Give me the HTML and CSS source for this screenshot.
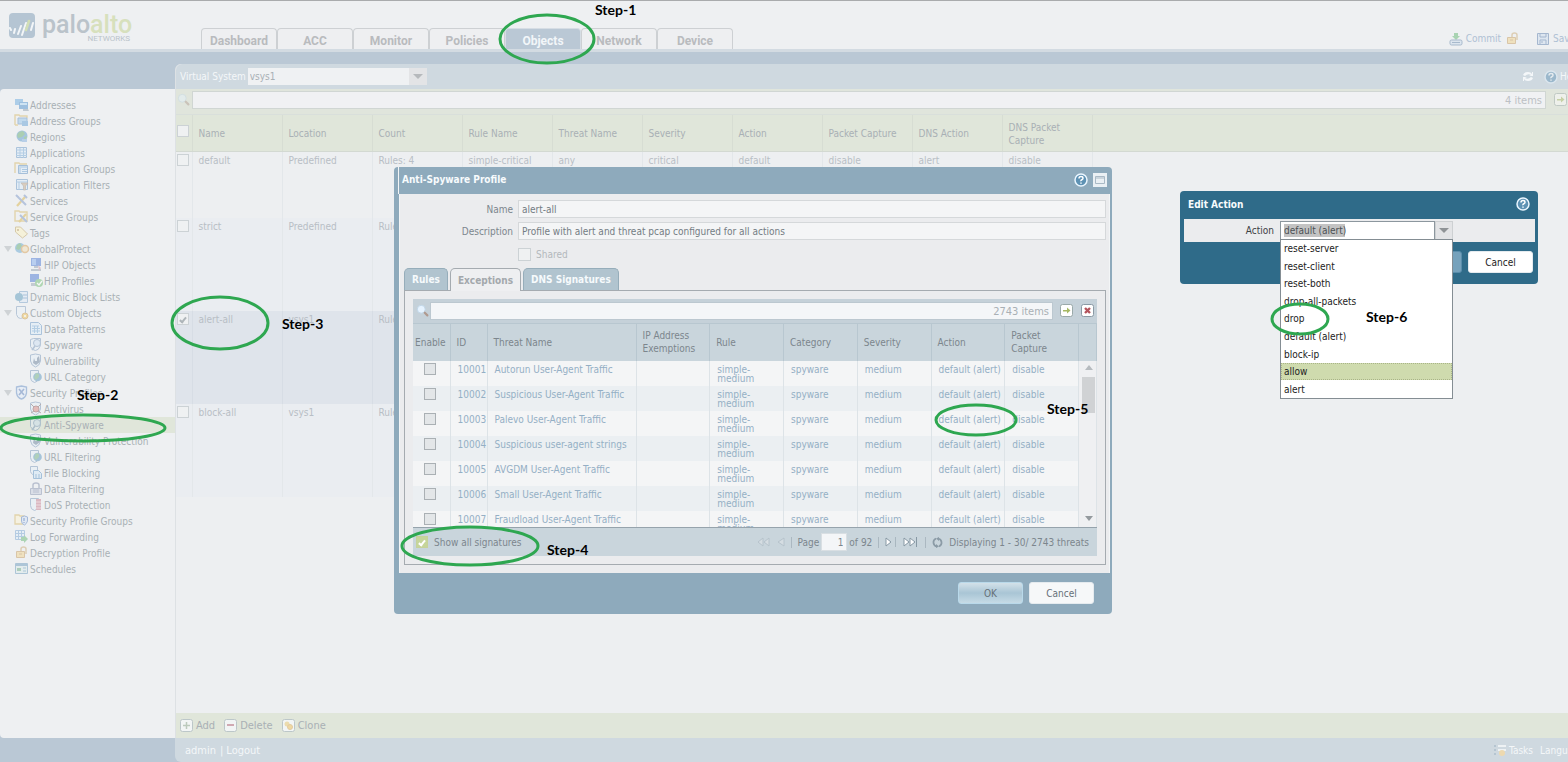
FILE: index.html
```html
<!DOCTYPE html>
<html lang="en">
<head>
<meta charset="utf-8">
<title>Anti-Spyware Profiles</title>
<link rel="stylesheet" href="styles.css">
</head>
<body>
<svg class="defs" aria-hidden="true">
  <symbol id="i-address" viewBox="0 0 16 16"><path d="M1 2h8v6H1z" fill="#5ea3dd"/><path d="M5 5h9v7H5z" fill="#3d86c9"/><path d="M6 6h7v2H6z" fill="#a9d4f5"/><path d="M9 12h5l1 2H9z" fill="#8a99a8"/></symbol>
  <symbol id="i-group" viewBox="0 0 16 16"><path d="M1 12V2h4l1 1h7v2M1 12h3" fill="none" stroke="#d5b35a" stroke-width="1.4"/><path d="M4 5h9v6H4z" fill="#8fc0e8" stroke="#5487bb"/><path d="M8 8h6v5H8z" fill="#5698d2"/></symbol>
  <symbol id="i-globe" viewBox="0 0 16 16"><circle cx="8" cy="7" r="5.5" fill="#4f93c9"/><path d="M5 3l4-1 2 3-3 3-4 1-1-3zM10 8l3-1-1 4-2 1z" fill="#5aa667"/><path d="M8 10h5v3H8z" fill="#79a9dd"/></symbol>
  <symbol id="i-app" viewBox="0 0 16 16"><path d="M2.500 2.500h10v10h-10z" fill="#d8ebfa" stroke="#5b8dc0"/><path d="M2 5h11M2 8h11M2 10.500h11M6 3v10M9.500 3v10" stroke="#6fa5d5"/></symbol>
  <symbol id="i-appgroup" viewBox="0 0 16 16"><path d="M1 12V2h4l1 1h7" fill="none" stroke="#d5b35a" stroke-width="1.400"/><path d="M4.500 4.500h9v8h-9z" fill="#d8ebfa" stroke="#4f86bd"/><path d="M4 6h10M6 7v5M8 8.500h5M8 10.500h5" stroke="#5e98cd"/></symbol>
  <symbol id="i-filter" viewBox="0 0 16 16"><path d="M2.500 2.500h11v10h-11z" fill="#d8ebfa" stroke="#5b8dc0"/><path d="M2 5h11M5 5v8" stroke="#6fa5d5"/><path d="M7 6h7l-2.500 3v4h-2V9z" fill="#c2a381" stroke="#8c7b6b" stroke-width=".7"/></symbol>
  <symbol id="i-tools" viewBox="0 0 16 16"><path d="M3 13l8-9" stroke="#d8af3a" stroke-width="2.200"/><path d="M4 4l8 8M2 2l3 3M10 2l3 3" stroke="#718fc4" stroke-width="2"/></symbol>
  <symbol id="i-toolgroup" viewBox="0 0 16 16"><path d="M1 12V2h4l1 1h7v9z" fill="none" stroke="#d5b35a" stroke-width="1.400"/><path d="M5 13l7-8" stroke="#d8af3a" stroke-width="2"/><path d="M6 6l7 7" stroke="#718fc4" stroke-width="2"/></symbol>
  <symbol id="i-tag" viewBox="0 0 16 16"><path d="M1.500 2v5l7 6 5-4-7-7z" fill="#fff3bd" stroke="#b99c52"/><circle cx="4" cy="5" r="1" fill="#a8823e"/></symbol>
  <symbol id="i-gp" viewBox="0 0 16 16"><circle cx="6" cy="7" r="5" fill="#5a9fce"/><path d="M3 4l3-2 2 3-3 4-3-1z" fill="#5aa667"/><circle cx="11" cy="8" r="3.500" fill="#f2ddb0" stroke="#d59946" stroke-width="1.500"/></symbol>
  <symbol id="i-pc" viewBox="0 0 16 16"><path d="M3 1h10v8H3z" fill="#3d6dd0"/><path d="M4 2h4v6H4z" fill="#7ba7ec"/><path d="M6 9h4v2H6zM3 12h10v2H3z" fill="#8e9bab"/><path d="M10 8l3 3-2 3z" fill="#c98c9a"/></symbol>
  <symbol id="i-pcok" viewBox="0 0 16 16"><path d="M2 1h9v8H2z" fill="#3d6dd0"/><path d="M3 10h7v3H3z" fill="#93a0ae"/><circle cx="11" cy="10" r="4" fill="#65b867"/><path d="M9 10l2 2 3-4" fill="none" stroke="#fff" stroke-width="1.300"/></symbol>
  <symbol id="i-block" viewBox="0 0 16 16"><path d="M5.500 2.500h8v11h-8z" fill="#d8e7f6" stroke="#6e9ac4"/><circle cx="5" cy="8" r="4" fill="#4e93b8"/><path d="M9 6h4M9 9h4" stroke="#5c8abd"/></symbol>
  <symbol id="i-custom" viewBox="0 0 16 16"><path d="M2.500 1.500h9v8q-2 4-5 4t-4-4z" fill="#e9f0f8" stroke="#7897ba"/><circle cx="11" cy="11" r="3" fill="#f0bd40" stroke="#c5913a"/><circle cx="11" cy="11" r="1" fill="#fff"/></symbol>
  <symbol id="i-doc" viewBox="0 0 16 16"><path d="M2.500 1.500h8l3 3v9h-11z" fill="#dcecfa" stroke="#5b8dc0"/><path d="M4 5h7M4 7.500h8M4 10h8M6.500 5v7M9.500 5v7" stroke="#6fa5d5"/></symbol>
  <symbol id="i-spy" viewBox="0 0 16 16"><path d="M2.500 2.500l3-1h7v7q-2 5-5 5t-5-4z" fill="#e4eef8" stroke="#6f90b6"/><circle cx="9" cy="6" r="3.500" fill="#c9def2" stroke="#6f90b6"/><path d="M7 9l-3 4" stroke="#6f90b6" stroke-width="1.500"/></symbol>
  <symbol id="i-vuln" viewBox="0 0 16 16"><path d="M2.500 2l5-1 5 1v6q-1 5-5 6-4-1-5-6z" fill="#e4eef8" stroke="#6f90b6"/><path d="M6 5l-1 5 3 2 4-3-1-6-2 2v3H7z" fill="#5f7894"/></symbol>
  <symbol id="i-url" viewBox="0 0 16 16"><path d="M2.500 1.500h8v7q-1 5-4 5-4-1-4-5z" fill="#e4eef8" stroke="#6f90b6"/><circle cx="9.500" cy="8" r="4.300" fill="#4d8eba"/><path d="M8 4l3 1v3l-3 3-2-2z" fill="#63aa77"/></symbol>
  <symbol id="i-shield" viewBox="0 0 16 16"><path d="M2.500 2l5-1 5 1v6q-1 5-5 6-4-1-5-6z" fill="#e0ebfa" stroke="#5b87c2" stroke-width="1.300"/><path d="M5 4l5 6M10 4l-5 6" stroke="#4d75b5" stroke-width="1.600"/></symbol>
  <symbol id="i-virus" viewBox="0 0 16 16"><path d="M2.500 2l5-1 5 1v6q-1 5-5 6-4-1-5-6z" fill="#e4eef8" stroke="#6f90b6"/><circle cx="8" cy="8" r="3" fill="#d77d76" stroke="#8a4c4c"/><path d="M3 3l3 3M13 3l-3 3M3 12l3-2M13 12l-3-2" stroke="#785a5a"/></symbol>
  <symbol id="i-file" viewBox="0 0 16 16"><path d="M2.500 1.500h7v9q-6 0-7-4z" fill="#e4eef8" stroke="#6f90b6"/><path d="M5.500 5.500h5l3 3v5h-8z" fill="#cfe5f7" stroke="#4e8abf"/><path d="M8 9v4M11 9v4" stroke="#4e8abf"/></symbol>
  <symbol id="i-data" viewBox="0 0 16 16"><path d="M5 7V4q0-2 3-2t3 2v3" fill="none" stroke="#7c89a8" stroke-width="1.500"/><path d="M2.500 7.500h11v6h-11z" fill="#c4c9db" stroke="#7c89a8"/><path d="M5 9h6M5 11h6" stroke="#7c89a8"/></symbol>
  <symbol id="i-dos" viewBox="0 0 16 16"><path d="M2.500 1.500h8v7q-1 5-4 5-4-1-4-5z" fill="#e4eef8" stroke="#6f90b6"/><path d="M8 2h5v11H8z" fill="#c47486"/><path d="M8 5h5M8 8h5M8 11h5" stroke="#e8c1ca"/></symbol>
  <symbol id="i-secgroup" viewBox="0 0 16 16"><path d="M1 11V2h4l1 1h4v8z" fill="#fff4cd" stroke="#d5b35a" stroke-width="1.300"/><path d="M7.500 4l3-1 3 1v4q-1 3-3 4-3-1-3-4z" fill="#cfe0f8" stroke="#4f78bd"/><path d="M10 5v3M10 9v1" stroke="#4f78bd" stroke-width="1.500"/></symbol>
  <symbol id="i-log" viewBox="0 0 16 16"><path d="M1.500 1.500h9v9h-9z" fill="#dcecfa" stroke="#6f9fd0"/><path d="M1 4.500h9M1 7.500h9M4.500 2v8M7.500 2v8" stroke="#6f9fd0"/><path d="M7 8h3V6l4 4-4 4v-2H7z" fill="#5eb36a"/></symbol>
  <symbol id="i-lock" viewBox="0 0 16 16"><path d="M7 7V4q0-2 2.500-2T12 4v5" fill="none" stroke="#caa66c" stroke-width="1.500"/><path d="M2.500 6.500h8v6h-8z" fill="#f2cf81" stroke="#c1924f"/><path d="M5 9h3" stroke="#c1924f"/></symbol>
  <symbol id="i-sched" viewBox="0 0 16 16"><path d="M1.500 2.500h12v10h-12z" fill="#d6e9e8" stroke="#5f93b8"/><path d="M1 4h13" stroke="#5f93b8" stroke-width="2"/><path d="M3 7h4v3H3z" fill="#5da477"/><path d="M9 7h3M9 10h3" stroke="#5f93b8"/></symbol>
  <symbol id="i-search" viewBox="0 0 16 16"><circle cx="6" cy="6" r="4.500" fill="#e6f3ff" stroke="#bdd3e6"/><path d="M10 10l3 3" stroke="#b09a90" stroke-width="2.500" stroke-linecap="round"/></symbol>
  <symbol id="i-go" viewBox="0 0 14 14"><rect x=".5" y=".5" width="12" height="12" rx="2" fill="#fff" stroke="#9aa9a9"/><path d="M3 6h4V3.500L10.500 6.500 7 9.500V7.500H3z" fill="#a7b964"/></symbol>
  <symbol id="i-clear" viewBox="0 0 14 14"><rect x=".5" y=".5" width="12" height="12" rx="2" fill="#fff" stroke="#8b9aa5"/><path d="M4 4l5 5M9 4l-5 5" stroke="#b4535c" stroke-width="2.400"/></symbol>
  <symbol id="i-help" viewBox="0 0 14 14"><circle cx="7" cy="7" r="6" fill="#5e92b4" stroke="#eaf6ff" stroke-width="1.500"/><path d="M5 5.500q0-2 2-2t2 1.700q0 1-1.200 1.500T7 8.300M7 9.500v1.300" fill="none" stroke="#fff" stroke-width="1.500"/></symbol>
</svg>

<div class="app">
  <header class="top">
    <div class="logo">
      <svg width="27" height="26" viewBox="0 0 27 26" aria-hidden="true"><rect width="26" height="25" rx="4" fill="#b5c5d3"/><g fill="none" stroke="#f3f6f8" stroke-width="2" stroke-linecap="round"><path d="M2 17l-1-2M5 20l1-4M9 21l3-8M13 22l4-12M22 17l2-7"/></g><path d="M17 17l3-9" stroke="#d2dfb5" stroke-width="2.500" stroke-linecap="round"/></svg>
      <div class="brand"><span class="word">palo<b>alto</b></span><span class="sub">NETWORKS</span></div>
    </div>
    <nav class="tabs">
      <a href="#">Dashboard</a><a href="#">ACC</a><a href="#">Monitor</a><a href="#">Policies</a><a href="#" class="on">Objects</a><a href="#">Network</a><a href="#">Device</a>
    </nav>
    <div class="actions">
      <a href="#"><svg width="14" height="14" viewBox="0 0 14 14"><path d="M5 1h4v3h2L7 8 3 4h2z" fill="#a8d3b2"/><rect x="1" y="8" width="12" height="5" rx="1.500" fill="#dce5ee" stroke="#a7b9cc"/><path d="M3 10.500h8" stroke="#a7b9cc"/></svg>Commit</a>
      <svg class="ic" width="16" height="16"><use href="#i-lock"/></svg>
      <a href="#" class="save"><svg width="12" height="12" viewBox="0 0 12 12"><path d="M.5.500h11v11H.5z" fill="#dde6f0" stroke="#a5b7cf"/><path d="M3 1v3h6V1M3 11V7h6v4M5 8v2" fill="none" stroke="#a5b7cf"/></svg>Save</a>
    </div>
  </header>
  <div class="band"></div>

  <div class="columns">
    <aside class="side">
      <ul class="tree">
        <li><svg><use href="#i-address"/></svg>Addresses</li>
        <li><svg><use href="#i-group"/></svg>Address Groups</li>
        <li><svg><use href="#i-globe"/></svg>Regions</li>
        <li><svg><use href="#i-app"/></svg>Applications</li>
        <li><svg><use href="#i-appgroup"/></svg>Application Groups</li>
        <li><svg><use href="#i-filter"/></svg>Application Filters</li>
        <li><svg><use href="#i-tools"/></svg>Services</li>
        <li><svg><use href="#i-toolgroup"/></svg>Service Groups</li>
        <li><svg><use href="#i-tag"/></svg>Tags</li>
        <li class="open"><svg><use href="#i-gp"/></svg>GlobalProtect</li>
        <li class="sub"><svg><use href="#i-pc"/></svg>HIP Objects</li>
        <li class="sub"><svg><use href="#i-pcok"/></svg>HIP Profiles</li>
        <li><svg><use href="#i-block"/></svg>Dynamic Block Lists</li>
        <li class="open"><svg><use href="#i-custom"/></svg>Custom Objects</li>
        <li class="sub"><svg><use href="#i-doc"/></svg>Data Patterns</li>
        <li class="sub"><svg><use href="#i-spy"/></svg>Spyware</li>
        <li class="sub"><svg><use href="#i-vuln"/></svg>Vulnerability</li>
        <li class="sub"><svg><use href="#i-url"/></svg>URL Category</li>
        <li class="open"><svg><use href="#i-shield"/></svg>Security Profiles</li>
        <li class="sub"><svg><use href="#i-virus"/></svg>Antivirus</li>
        <li class="sub on"><svg><use href="#i-spy"/></svg>Anti-Spyware</li>
        <li class="sub"><svg><use href="#i-vuln"/></svg>Vulnerability Protection</li>
        <li class="sub"><svg><use href="#i-url"/></svg>URL Filtering</li>
        <li class="sub"><svg><use href="#i-file"/></svg>File Blocking</li>
        <li class="sub"><svg><use href="#i-data"/></svg>Data Filtering</li>
        <li class="sub"><svg><use href="#i-dos"/></svg>DoS Protection</li>
        <li><svg><use href="#i-secgroup"/></svg>Security Profile Groups</li>
        <li><svg><use href="#i-log"/></svg>Log Forwarding</li>
        <li><svg><use href="#i-lock"/></svg>Decryption Profile</li>
        <li><svg><use href="#i-sched"/></svg>Schedules</li>
      </ul>
    </aside>

    <main class="main">
      <div class="context">
        <label for="vsys">Virtual System</label>
        <span class="combo"><select id="vsys"><option>vsys1</option></select><i></i></span>
        <div class="right">
          <svg width="12" height="11" viewBox="0 0 12 11"><path d="M1 4q1-3 5-3 3 0 4 2V1h1v4H7l2-1Q6 2 3 5zM11 7q-1 3-5 3-3 0-4-2v2H1V6h4L3 7q3 2 6-1z" fill="#f4f7f9"/></svg>
          <a href="#" class="help"><svg width="14" height="14"><use href="#i-help"/></svg>Help</a>
        </div>
      </div>
      <div class="search">
        <svg class="ic" width="14" height="14" viewBox="0 0 14 14"><use href="#i-search"/></svg>
        <div class="field"><input type="text" aria-label="Filter profiles"><span>4 items</span></div>
        <svg class="ic go" width="14" height="14"><use href="#i-go"/></svg>
      </div>
      <div class="listing">
        <table class="grid">
          <colgroup><col class="c-chk"><col span="10" class="c-std"><col></colgroup>
          <thead><tr><th><input type="checkbox" aria-label="Select all"></th><th>Name</th><th>Location</th><th>Count</th><th>Rule Name</th><th>Threat Name</th><th>Severity</th><th>Action</th><th>Packet Capture</th><th>DNS Action</th><th>DNS Packet<br>Capture</th><th></th></tr></thead>
          <tbody>
            <tr class="first"><td><input type="checkbox" aria-label="default"></td><td>default</td><td>Predefined</td><td>Rules: 4</td><td>simple-critical</td><td>any</td><td>critical</td><td>default</td><td>disable</td><td>alert</td><td>disable</td><td class="end"></td></tr>
            <tr class="alt"><td><input type="checkbox" aria-label="strict"></td><td>strict</td><td>Predefined</td><td>Rules: 5</td><td></td><td></td><td></td><td></td><td></td><td></td><td></td><td class="end"></td></tr>
            <tr class="sel"><td><input type="checkbox" checked aria-label="alert-all"></td><td>alert-all</td><td>vsys1</td><td>Rules: 5</td><td></td><td></td><td></td><td></td><td></td><td></td><td></td><td class="end"></td></tr>
            <tr class="alt"><td><input type="checkbox" aria-label="block-all"></td><td>block-all</td><td>vsys1</td><td>Rules: 5</td><td></td><td></td><td></td><td></td><td></td><td></td><td></td><td class="end"></td></tr>
          </tbody>
        </table>
      </div>
      <div class="tools">
        <button type="button"><svg width="13" height="13" viewBox="0 0 13 13"><rect x=".5" y=".5" width="12" height="12" rx="2" fill="#f2f5f5" stroke="#bcc7c9"/><path d="M3 6.500h7M6.500 3v7" stroke="#bccabd" stroke-width="1.500"/></svg>Add</button>
        <button type="button"><svg width="13" height="13" viewBox="0 0 13 13"><rect x=".5" y=".5" width="12" height="12" rx="2" fill="#f2f5f5" stroke="#bcc7c9"/><path d="M3 6h7" stroke="#d0a9b2" stroke-width="2"/></svg>Delete</button>
        <button type="button"><svg width="13" height="13" viewBox="0 0 13 13"><rect x=".5" y=".5" width="12" height="12" rx="2" fill="#f2f5f5" stroke="#bcc7c9"/><circle cx="5" cy="5" r="2.500" fill="#ecdcae"/><circle cx="8" cy="8" r="2.500" fill="#eed9a2" stroke="#e3caa0"/></svg>Clone</button>
      </div>
    </main>
  </div>

  <footer class="foot">
    <div class="footbar">
      <a href="#">admin</a><span class="bar">|</span><a href="#">Logout</a>
      <div class="right"><a href="#"><svg width="14" height="13" viewBox="0 0 14 13"><path d="M1 1h2v2H1zM1 5h2v2H1zM1 9h2v2H1z" fill="#b5c5d1"/><path d="M5 2h8M5 6h8" stroke="#eef2f4" stroke-width="2"/><circle cx="9" cy="9" r="3" fill="#edd9af"/></svg>Tasks</a><a href="#" class="lang">Language</a></div>
    </div>
  </footer>
</div>

<section class="dialog profile" role="dialog" aria-labelledby="pt">
  <div class="dtitle"><h2 id="pt">Anti-Spyware Profile</h2><svg width="14" height="14"><use href="#i-help"/></svg><svg width="14" height="14" viewBox="0 0 14 14"><path d="M0 0h14v14H0z" fill="#eaf0f4"/><path d="M2.500 3.500h9v7h-9zM3 5h8" fill="none" stroke="#a9b9c5"/></svg></div>
  <div class="dbody">
    <form class="form">
      <label for="pn">Name</label><input id="pn" type="text" value="alert-all">
      <label for="pd">Description</label><input id="pd" type="text" value="Profile with alert and threat pcap configured for all actions">
      <span></span><span class="shared"><input id="ps" type="checkbox" disabled><label for="ps">Shared</label></span>
    </form>
    <div class="dtabs"><button type="button">Rules</button><button type="button" class="on">Exceptions</button><button type="button">DNS Signatures</button></div>
    <div class="panel">
      <div class="search">
        <svg width="14" height="14" viewBox="0 0 14 14"><use href="#i-search"/></svg>
        <div class="field"><input type="text" aria-label="Filter threats"><span>2743 items</span></div>
        <svg width="14" height="14"><use href="#i-go"/></svg><svg width="14" height="14"><use href="#i-clear"/></svg>
      </div>
      <div class="rows">
        <table class="sigs">
          <colgroup><col class="s-id"><col class="s-id"><col class="s-name"><col span="6"><col class="s-bar"></colgroup>
          <thead><tr><th>Enable</th><th>ID</th><th>Threat Name</th><th>IP Address<br>Exemptions</th><th>Rule</th><th>Category</th><th>Severity</th><th>Action</th><th>Packet<br>Capture</th><th></th></tr></thead>
          <tbody>
            <tr><td><input type="checkbox" aria-label="Enable 10001"></td><td>10001</td><td>Autorun User-Agent Traffic</td><td></td><td>simple-<br>medium</td><td>spyware</td><td>medium</td><td>default (alert)</td><td>disable</td><td></td></tr>
            <tr><td><input type="checkbox" aria-label="Enable 10002"></td><td>10002</td><td>Suspicious User-Agent Traffic</td><td></td><td>simple-<br>medium</td><td>spyware</td><td>medium</td><td>default (alert)</td><td>disable</td><td></td></tr>
            <tr><td><input type="checkbox" aria-label="Enable 10003"></td><td>10003</td><td>Palevo User-Agent Traffic</td><td></td><td>simple-<br>medium</td><td>spyware</td><td>medium</td><td>default (alert)</td><td>disable</td><td></td></tr>
            <tr><td><input type="checkbox" aria-label="Enable 10004"></td><td>10004</td><td>Suspicious user-agent strings</td><td></td><td>simple-<br>medium</td><td>spyware</td><td>medium</td><td>default (alert)</td><td>disable</td><td></td></tr>
            <tr><td><input type="checkbox" aria-label="Enable 10005"></td><td>10005</td><td>AVGDM User-Agent Traffic</td><td></td><td>simple-<br>medium</td><td>spyware</td><td>medium</td><td>default (alert)</td><td>disable</td><td></td></tr>
            <tr><td><input type="checkbox" aria-label="Enable 10006"></td><td>10006</td><td>Small User-Agent Traffic</td><td></td><td>simple-<br>medium</td><td>spyware</td><td>medium</td><td>default (alert)</td><td>disable</td><td></td></tr>
            <tr><td><input type="checkbox" aria-label="Enable 10007"></td><td>10007</td><td>Fraudload User-Agent Traffic</td><td></td><td>simple-<br>medium</td><td>spyware</td><td>medium</td><td>default (alert)</td><td>disable</td><td></td></tr>
          </tbody>
        </table>
        <div class="scroll"><i class="up"></i><i class="thumb"></i><i class="down"></i></div>
      </div>
      <div class="pager">
        <label class="all"><input type="checkbox" checked>Show all signatures</label>
        <svg width="14" height="10" viewBox="0 0 14 10"><path d="M6 1v8L1 5zM12 1v8L7 5z" fill="#d5dde2" stroke="#b6c3cc"/></svg>
        <svg width="8" height="10" viewBox="0 0 8 10"><path d="M7 1v8L1 5z" fill="#d5dde2" stroke="#b6c3cc"/></svg>
        <i class="sep"></i>
        <label class="page" for="pg">Page</label><input id="pg" type="text" value="1"><span class="of">of 92</span>
        <i class="sep"></i>
        <svg width="12" height="10" viewBox="0 0 12 10"><path d="M1 1v8l5-4z" fill="#fff" stroke="#8798a4"/><path d="M10.500 0v10" stroke="#a9b7c0"/></svg>
        <svg width="16" height="10" viewBox="0 0 16 10"><path d="M1 1v8l5-4zM7 1v8l5-4z" fill="#fff" stroke="#8798a4"/><path d="M13.500 0v10" stroke="#8798a4"/></svg>
        <i class="sep"></i>
        <svg width="11" height="11" viewBox="0 0 11 11"><path d="M4 1.500Q1 3 1.500 6T5 9.500M7 9.500Q10 8 9.500 5T6 1.500" fill="none" stroke="#8b9ba6" stroke-width="1.700"/><path d="M4 7l3 2.500L4 11zM7 0L4 1.500 7 4z" fill="#8b9ba6"/></svg>
        <span>Displaying 1 - 30/ 2743 threats</span>
      </div>
    </div>
  </div>
  <div class="dfoot"><button type="button" class="ok">OK</button><button type="button">Cancel</button></div>
</section>

<section class="dialog edit" role="dialog" aria-labelledby="et">
  <div class="dtitle"><h2 id="et">Edit Action</h2><svg width="14" height="14"><use href="#i-help"/></svg></div>
  <div class="dbody"><label for="act">Action</label><span class="combo"><select id="act"><option>default (alert)</option></select><i></i></span></div>
  <div class="dfoot"><button type="button" class="ok" aria-label="OK"></button><button type="button">Cancel</button></div>
  <ul class="menu" role="listbox" aria-label="Action">
    <li role="option">reset-server</li><li role="option">reset-client</li><li role="option">reset-both</li><li role="option">drop-all-packets</li><li role="option">drop</li><li role="option">default (alert)</li><li role="option">block-ip</li><li role="option" class="on">allow</li><li role="option">alert</li>
  </ul>
</section>

<svg class="marks" width="1568" height="762">
  <g fill="none" stroke="#2ea750" stroke-width="3">
    <ellipse cx="547" cy="39" rx="47" ry="24"/><ellipse cx="83" cy="428" rx="82" ry="13"/><ellipse cx="220" cy="323" rx="48" ry="26"/><ellipse cx="470" cy="546" rx="68" ry="19"/><ellipse cx="976" cy="420" rx="40" ry="15"/><ellipse cx="1300" cy="319" rx="28" ry="15"/>
  </g>
  <text x="595" y="15">Step-1</text><text x="77" y="400">Step-2</text><text x="282" y="329">Step-3</text><text x="547" y="555">Step-4</text><text x="1047" y="414">Step-5</text><text x="1366" y="322">Step-6</text>
</svg>
</body>
</html>
```
FILE: styles.css
```css
* { box-sizing: border-box; }
body { margin: 0; background: #eef0f2; color: #a9b0b5; font: 10px/13px "DejaVu Sans Condensed", "Noto Sans", sans-serif; overflow: hidden; }
input, select, button { font: inherit; color: inherit; }
a { color: inherit; text-decoration: none; }
svg { flex: none; }
ul { list-style: none; margin: 0; padding: 0; }
.defs { position: absolute; width: 0; height: 0; }
.ic, .tree svg, .help svg { opacity: .45; }
.app { height: 100vh; display: flex; flex-direction: column; overflow: hidden; }

/* header */
.top { height: 52px; flex: none; display: flex; align-items: flex-end; border-top: 1px solid #a9abad; border-bottom: 3px solid #d3dbe2; }
.logo { width: 201px; flex: none; display: flex; align-self: flex-start; padding: 12px 0 0 9px; gap: 6px; }
.brand { display: flex; flex-direction: column; width: 88px; font-family: Roboto, sans-serif; }
.word { font-size: 25px; line-height: 23px; font-weight: 500; color: #bac3ca; }
.word b { font-weight: 500; color: #d7e0bd; }
.brand .sub { font-size: 8px; line-height: 6px; text-align: right; color: #bac3ca; }
.tabs { display: flex; }
.tabs a { width: 76px; height: 21px; border: 1px solid #cdd0d3; border-bottom: 0; border-radius: 4px 4px 0 0; background: #eeeff1; font: 700 12px/24px Roboto, sans-serif; text-align: center; color: #b9bbbe; }
.tabs .on { background: #bac8d5; color: #f2f6f9; border-color: #d6dde4; }
.actions { margin-left: auto; display: flex; align-items: center; height: 21px; color: #afc0d4; }
.actions a { display: flex; align-items: center; gap: 3px; }
.actions .ic { margin: 0 16px 0 4px; }
.actions .save { width: 31px; overflow: hidden; gap: 4px; }
.band { height: 12px; flex: none; background: #bac8d5; }

/* columns */
.columns { flex: 1; min-height: 0; display: flex; background: #bac8d5; }
.side { width: 175px; flex: none; margin-top: 25px; padding-top: 8px; background: #eef0f2; border-radius: 4px 0 0 4px; }
.tree li { height: 16px; display: flex; align-items: center; padding-left: 14px; white-space: nowrap; }
.tree svg { width: 16px; height: 16px; }
.tree .sub { padding-left: 28px; }
.tree .on { background: #e0e6da; }
.tree .open { padding-left: 4px; }
.tree .open::before { content: ""; margin-right: 2px; border: 4px solid transparent; border-top: 6px solid #cfd3d6; border-bottom: 0; }
.main { flex: 1; min-width: 0; display: flex; flex-direction: column; border-left: 1px solid #dde1e4; border-radius: 6px 0 0 0; background: #eef0f2; }
.context { height: 25px; flex: none; display: flex; align-items: center; gap: 2px; padding-left: 4px; background: #cfd9e0; color: #f4f7f9; border-radius: 6px 0 0 0; }
.right { margin-left: auto; display: flex; align-items: center; gap: 10px; }
.help { display: flex; align-items: center; gap: 2px; width: 24px; overflow: hidden; }
.combo { display: flex; }
.combo select { width: 161px; height: 17px; padding: 0 2px; border: 0; border-radius: 0; appearance: none; background: #eff1f3; color: #a9b0b5; }
.combo i { width: 18px; height: 17px; display: grid; place-items: center; background: #e3e4e6; }
.combo i::after { content: ""; border: 5px solid transparent; border-top-color: #b6b9bc; border-bottom: 0; }
.search { display: flex; align-items: center; }
.main .search { height: 26px; flex: none; background: #e0e5dc; padding: 0 0 3px 1px; border-bottom: 1px solid #d9dfdb; gap: 1px; }
.field { flex: 1; display: flex; align-items: center; height: 18px; background: #f0f1f3; border: 1px solid #d0d6d3; padding-right: 3px; color: #bcc0c4; font-size: 11px; }
.field input { flex: 1; min-width: 0; height: 15px; padding: 0 4px; border: 0; background: none; outline: 0; }
.search .go { margin-left: 7px; }
.listing { flex: 1; min-height: 0; overflow: hidden; background: #edeff1; }
.grid { width: 100%; table-layout: fixed; border-collapse: collapse; }
.c-chk { width: 16px; }
.c-std { width: 90px; }
.grid th { height: 36px; padding: 2px 6px 0; text-align: left; font-weight: 400; background: #e0e6da; border-right: 1px solid #d7ddd3; border-bottom: 1px solid #d3d9d2; }
.grid td { height: 93px; vertical-align: top; padding: 2px 6px; border-right: 1px solid #e3e7ea; color: #b8bec5; }
.grid th:first-child, .grid td:first-child { padding: 2px 1px; vertical-align: top; }
.grid th:first-child { padding-top: 10px; }
.grid .first td { height: 67px; }
.grid .alt td { background: #eaedf1; }
.grid .sel td { background: #dfe4eb; border-color: #d7dde5; }
.grid td.end, .grid th:last-child { border-right: 0; }
.grid .alt td.end, .grid .sel td.end { background: none; }
input[type=checkbox] { appearance: none; width: 12px; height: 12px; margin: 0; display: grid; place-items: center; border: 1px solid #ccd2d5; background: #eff1f2; flex: none; }
input[type=checkbox]:checked::after { content: ""; width: 2px; height: 5px; border: solid #aeb5b9; border-width: 0 2px 2px 0; transform: rotate(40deg); }
.tools { height: 25px; flex: none; display: flex; align-items: center; gap: 9px; padding-left: 4px; background: #e0e6da; font-size: 11px; }
.tools button { display: flex; align-items: center; gap: 3px; padding: 0; border: 0; background: none; }
.foot { height: 24px; flex: none; padding-left: 175px; background: #bac8d5; }
.footbar { height: 24px; display: flex; align-items: center; padding-left: 10px; background: #cfd9e0; color: #f4f7f9; border-radius: 0 0 0 6px; font-size: 11px; }
.bar { margin: 0 3px 0 4px; }
.footbar .right { gap: 7px; font-size: 10px; }
.footbar .right a { display: flex; gap: 2px; }
.footbar .lang { width: 28px; overflow: hidden; }

/* dialogs */
.dialog { position: absolute; border-radius: 4px; }
.dtitle { height: 27px; display: flex; align-items: center; gap: 5px; padding: 0 5px 2px 8px; color: #f7fbfd; }
.dtitle h2 { margin: 0 auto 0 0; font-size: 10px; line-height: 13px; }
.profile .dtitle { margin-left: 4px; padding-left: 3px; border-left: 1px solid #f3f5f6; }
.dfoot { display: flex; justify-content: flex-end; gap: 6px; }
.dfoot button { width: 65px; height: 22px; padding: 0; border: 1px solid #e5ebef; border-radius: 3px; background: #f6f8f9; color: #667078; }
.dfoot .ok { border-color: #b9d9ea; background: linear-gradient(#d3e1e9, #a9c5d5 50%, #c6dbe6); }
.profile { left: 394px; top: 167px; width: 718px; background: #8eaabc; color: #7c868d; }
.profile .dbody { margin: 0 2px 0 5px; padding: 6px 3px 8px 4px; border: solid #f3f5f6; border-width: 0 1px 0 1px; background: #ebecee; }
.form { display: grid; grid-template-columns: 109px 1fr; gap: 4px 5px; align-items: center; }
.form > label { text-align: right; }
.form input[type=text] { min-width: 0; height: 18px; padding: 0 3px; border: 1px solid #d5d8da; background: #f4f5f6; color: #737c83; }
.shared { display: flex; align-items: center; gap: 5px; height: 20px; color: #b3b8bc; }
.shared input[type=checkbox] { width: 13px; height: 13px; }
.dtabs { display: flex; gap: 2px; margin-top: 4px; }
.dtabs button { height: 22px; padding: 0 7px; border: 1px solid #96adba; border-bottom: 0; border-radius: 5px 5px 0 0; background: #b1c4cf; color: #f6fafc; font-weight: 700; }
.dtabs .on { background: #eeeff1; color: #a3a8ac; border-color: #a5abb0; margin-bottom: -1px; height: 23px; }
.panel { border: 1px solid #a5abb0; padding: 8px; }
.panel .search { height: 24px; gap: 7px; padding: 0 2px 0 3px; background: #c5d1d9; }
.panel .field { margin-left: -7px; background: #f4f6f8; border-color: #bcc8d0; color: #a9b0b5; }
.rows { position: relative; height: 205px; overflow: hidden; border-bottom: 1px solid #96a3ac; }
.sigs { width: 100%; table-layout: fixed; border-collapse: collapse; }
.s-id { width: 37px; }
.s-name { width: 149px; }
.s-bar { width: 18px; }
.sigs th { height: 37px; padding: 0 6px; text-align: left; font-weight: 400; background: #c9d5dc; border-right: 1px solid #b8c7d0; border-top: 1px solid #b8c7d0; }
.sigs th:first-child { padding: 0 2px; }
.sigs td { height: 25px; padding: 2px 7px 0; vertical-align: top; white-space: nowrap; color: #94afc5; border-right: 1px solid #dde3e7; background: #f4f5f6; }
.sigs td:nth-child(5) { padding-top: 4px; line-height: 9px; }
.sigs tr:nth-child(even) td { background: #ebeff2; }
.sigs tr td:last-child { background: #eff0f2; }
.sigs td input[type=checkbox] { margin-left: 4px; border-color: #aab0b4; background: #e3e6e8; }
.scroll { position: absolute; right: 2px; top: 42px; bottom: 6px; width: 13px; display: flex; flex-direction: column; align-items: center; }
.scroll .up { border: 4px solid transparent; border-bottom: 5px solid #b6bbbf; border-top: 0; }
.scroll .thumb { margin-top: 7px; width: 13px; height: 36px; background: #d0d2d4; }
.scroll .down { margin-top: auto; border: 4px solid transparent; border-top: 5px solid #949a9e; border-bottom: 0; }
.pager { height: 28px; display: flex; align-items: center; gap: 6px; padding: 0 8px 0 3px; background: #c9d5dc; white-space: nowrap; }
.all { margin-right: auto; display: flex; align-items: center; gap: 6px; }
.all input[type=checkbox] { border-color: #c6d29a; background: #c6d59a; }
.all input[type=checkbox]:checked::after { border-color: #fff; }
.sep { width: 1px; height: 11px; background: #abb8c1; }
.pager input[type=text] { width: 26px; height: 18px; padding: 0 3px; border: 1px solid #d9dfe3; background: #f4f6f8; text-align: right; }
.pager label.page { margin-right: -4px; }
.pager .of { margin-left: -4px; }
.profile .dfoot { padding: 9px 18px 10px; }
.edit { left: 1180px; top: 191px; width: 358px; background: #2f6b89; }
.edit .dtitle { height: 28px; padding-right: 8px; }
.edit .dbody { display: flex; gap: 6px; margin: 0 3px 0 4px; height: 23px; padding-bottom: 1px; align-items: center; background: #ebecee; color: #3d4144; }
.edit .dbody label { width: 90px; text-align: right; }
.edit .combo select { width: 155px; height: 19px; padding: 0 3px; border: 1px solid #8c979e; color: #4b5054; background: linear-gradient(#c3c3c3, #c3c3c3) 3px 2px / 61px 13px no-repeat #fff; }
.edit .combo i { height: 19px; border: 1px solid #cdd0d2; }
.edit .combo i::after { border-top-color: #8f9396; }
.edit .dfoot { padding: 9px 5px 11px; }
.edit .dfoot button { background: #fff; color: #222; }
.edit .dfoot .ok { background: #76a2bc; border-color: #5a8dab; }
.menu { position: absolute; left: 100px; top: 48px; width: 173px; height: 160px; display: grid; grid-auto-rows: 1fr; border: 1px solid #848d93; background: #fff; color: #222; }
.menu li { display: flex; align-items: center; padding: 0 3px; }
.menu .on { background: #cfdbae; border: 1px dotted #a9b488; padding: 0 2px; }
.marks { position: absolute; left: 0; top: 0; pointer-events: none; }
.marks text { font: 700 14px Lato, sans-serif; fill: #000; }
```
